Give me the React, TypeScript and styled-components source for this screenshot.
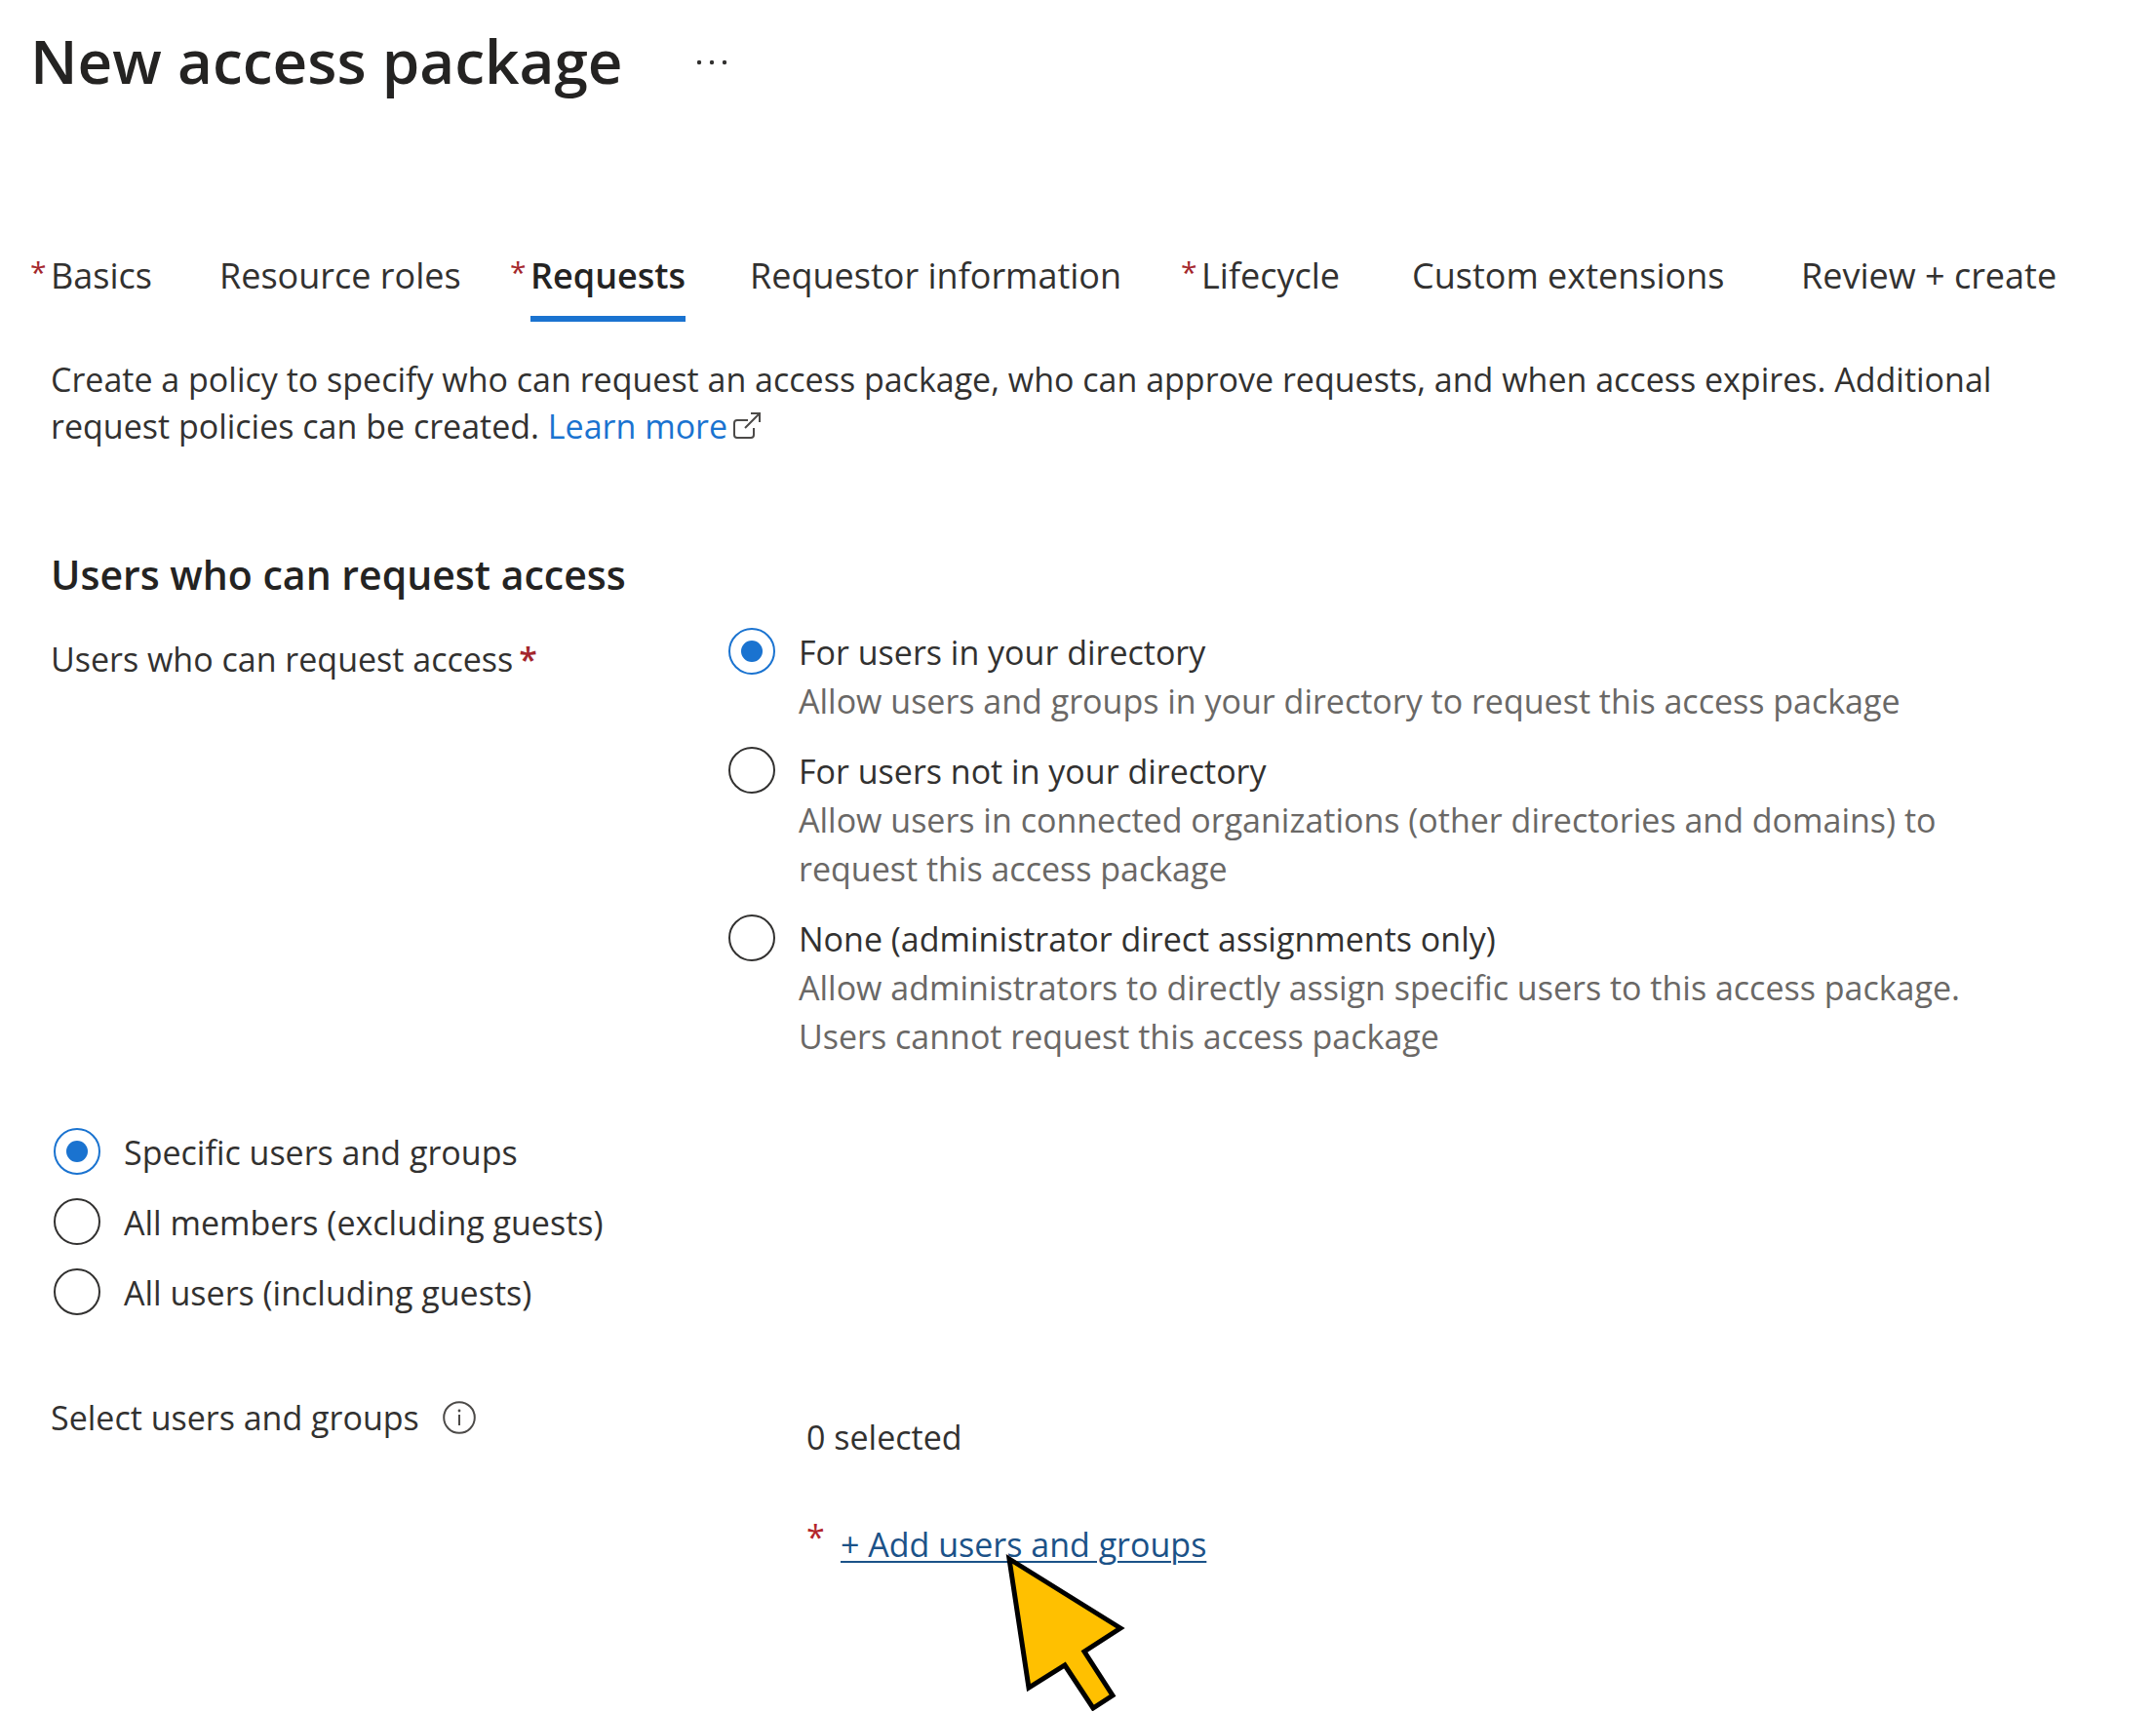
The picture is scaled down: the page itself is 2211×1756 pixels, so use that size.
import React, { useState } from "react";
import styled, { createGlobalStyle } from "styled-components";

const GlobalStyle = createGlobalStyle`
  *, *::before, *::after { box-sizing: border-box; }
  body {
    margin: 0;
    background: #ffffff;
    color: #323130;
    font-family: "Open Sans", "Noto Sans", sans-serif;
    font-size: 34px;
    line-height: 48px;
  }
`;

const Page = styled.main`
  min-height: 100vh;
  padding: 22px 94px 0 31px;
`;

const Header = styled.header`
  display: flex;
  align-items: center;
  gap: 74px;
  height: 80px;
`;

const Title = styled.h1`
  margin: 0;
  color: #242322;
  font-size: 62px;
  font-weight: 600;
  line-height: 80px;
`;

const MoreButton = styled.button`
  display: flex;
  padding: 4px 0 0;
  border: 0;
  background: none;
  color: #323130;
`;

const Tabs = styled.div`
  display: grid;
  grid-template-columns: 173fr 319fr 225fr 463fr 216fr 399fr 291fr;
  margin-top: 157px;
`;

const TabItem = styled.div`
  display: flex;
  align-items: flex-start;
`;

const TabMark = styled.span`
  flex: none;
  width: 21px;
  color: #a4262c;
  font-size: 30px;
  line-height: 40px;
`;

const Tab = styled.button<{ $active: boolean }>`
  height: 71px;
  padding: 0 0 17px;
  border: 0;
  border-bottom: 6px solid ${(p) => (p.$active ? "#1a73d0" : "transparent")};
  background: none;
  color: ${(p) => (p.$active ? "#242322" : "#323130")};
  font: inherit;
  font-size: 36px;
  font-weight: ${(p) => (p.$active ? 600 : 400)};
  white-space: nowrap;
`;

const Content = styled.div`
  padding: 35px 56px 0 21px;
`;

const Intro = styled.p`
  margin: 0;
`;

const LearnMore = styled.a`
  color: #1a73d0;
  text-decoration: none;

  svg {
    margin-left: 6px;
    color: #4c4a48;
  }
`;

const SectionTitle = styled.h2`
  margin: 96px 0 0;
  color: #242322;
  font-size: 41px;
  font-weight: 600;
  line-height: 64px;
`;

const Field = styled.div<{ $top: number }>`
  display: grid;
  grid-template-columns: 695px 1fr;
  margin-top: ${(p) => p.$top}px;
`;

const FieldLabel = styled.div`
  display: flex;
  align-items: center;
  align-self: start;
  padding-top: 8px;
`;

const Required = styled.span`
  margin-left: 6px;
  color: #a4262c;
  font-weight: 600;
`;

const RadioGroup = styled.div`
  display: flex;
  flex-direction: column;
  gap: 22px;
`;

const Option = styled.label`
  display: flex;
  align-items: flex-start;
  gap: 24px;
  line-height: 50px;
`;

const Radio = styled.input`
  flex: none;
  width: 48px;
  height: 48px;
  margin: 0;
  padding: 11px;
  border: 2px solid #323130;
  border-radius: 50%;
  appearance: none;
  background: transparent content-box;

  &:checked {
    border-color: #1a73d0;
    background-color: #1a73d0;
  }
`;

const OptionText = styled.span`
  display: flex;
  flex-direction: column;
`;

const Hint = styled.span`
  color: #6a6866;
`;

const ScopeGroup = styled(RadioGroup)`
  margin-top: 69px;
  padding-left: 3px;
`;

const InfoButton = styled.button`
  display: flex;
  margin-left: 24px;
  padding: 0;
  border: 0;
  background: none;
  color: #4c4a48;
`;

const Selection = styled.div`
  display: flex;
  flex-direction: column;
  gap: 62px;
  padding: 28px 0 0 80px;
`;

const AddRow = styled.div`
  display: flex;
  align-items: flex-start;
  gap: 16px;
`;

const AddMark = styled.span`
  width: 19px;
  color: #b3262c;
  line-height: 32px;
`;

const AddLink = styled.a`
  position: relative;
  color: #1b5288;
  text-decoration: underline;
  text-decoration-thickness: 2px;
  text-underline-offset: 4px;
`;

const Pointer = styled.svg`
  position: absolute;
  top: 29px;
  left: 166px;
`;

const tabs = [
  { name: "Basics", required: true },
  { name: "Resource roles", required: false },
  { name: "Requests", required: true },
  { name: "Requestor information", required: false },
  { name: "Lifecycle", required: true },
  { name: "Custom extensions", required: false },
  { name: "Review + create", required: false },
];

const audiences = [
  {
    title: "For users in your directory",
    hint: "Allow users and groups in your directory to request this access package",
  },
  {
    title: "For users not in your directory",
    hint: "Allow users in connected organizations (other directories and domains) to request this access package",
  },
  {
    title: "None (administrator direct assignments only)",
    hint: "Allow administrators to directly assign specific users to this access package. Users cannot request this access package",
  },
];

const scopes = [
  "Specific users and groups",
  "All members (excluding guests)",
  "All users (including guests)",
];

export default function App() {
  const [tab, setTab] = useState("Requests");
  const [audience, setAudience] = useState(0);
  const [scope, setScope] = useState(0);

  return (
    <>
      <GlobalStyle />
      <Page>
        <Header>
          <Title>New access package</Title>
          <MoreButton type="button" aria-label="More actions">
            <svg width="34" height="8" viewBox="0 0 34 8" fill="currentColor">
              <circle cx="4" cy="4" r="2.2" />
              <circle cx="17" cy="4" r="2.2" />
              <circle cx="30" cy="4" r="2.2" />
            </svg>
          </MoreButton>
        </Header>

        <Tabs role="tablist">
          {tabs.map((t) => (
            <TabItem key={t.name} role="presentation">
              <TabMark>{t.required ? "*" : ""}</TabMark>
              <Tab
                type="button"
                role="tab"
                aria-selected={tab === t.name}
                $active={tab === t.name}
                onClick={() => setTab(t.name)}
              >
                {t.name}
              </Tab>
            </TabItem>
          ))}
        </Tabs>

        <Content>
          <Intro>
            Create a policy to specify who can request an access package, who can approve
            requests, and when access expires. Additional request policies can be created.{" "}
            <LearnMore href="#learn-more">
              Learn more
              <svg width="29" height="27" viewBox="0 0 29 27" fill="none" stroke="currentColor" strokeWidth="2">
                <path d="M15 8H4a3 3 0 0 0-3 3v12a3 3 0 0 0 3 3h14a3 3 0 0 0 3-3v-7" />
                <path d="M18 1h9v9M27 1L12 16" />
              </svg>
            </LearnMore>
          </Intro>

          <SectionTitle>Users who can request access</SectionTitle>

          <Field $top={23}>
            <FieldLabel id="audience-label">
              Users who can request access<Required>*</Required>
            </FieldLabel>
            <RadioGroup role="radiogroup" aria-labelledby="audience-label">
              {audiences.map((a, i) => (
                <Option key={a.title}>
                  <Radio
                    type="radio"
                    name="audience"
                    checked={audience === i}
                    onChange={() => setAudience(i)}
                  />
                  <OptionText>
                    <span>{a.title}</span>
                    <Hint>{a.hint}</Hint>
                  </OptionText>
                </Option>
              ))}
            </RadioGroup>
          </Field>

          <ScopeGroup role="radiogroup" aria-label="Scope">
            {scopes.map((s, i) => (
              <Option key={s}>
                <Radio type="radio" name="scope" checked={scope === i} onChange={() => setScope(i)} />
                <OptionText>{s}</OptionText>
              </Option>
            ))}
          </ScopeGroup>

          <Field $top={71}>
            <FieldLabel>
              Select users and groups
              <InfoButton type="button" aria-label="About selecting users and groups">
                <svg width="34" height="34" viewBox="0 0 34 34" fill="none" stroke="currentColor">
                  <circle cx="17" cy="17" r="15.8" strokeWidth="2" />
                  <path d="M17 14v11" strokeWidth="2" />
                  <circle cx="17" cy="10" r="1.4" fill="currentColor" stroke="none" />
                </svg>
              </InfoButton>
            </FieldLabel>
            <Selection>
              <span>0 selected</span>
              <AddRow>
                <AddMark>*</AddMark>
                <AddLink href="#add">
                  + Add users and groups
                  <Pointer width="130" height="166" viewBox="0 0 130 166" aria-hidden="true">
                    <path
                      d="M7 10L121 81L84 105L113 150L93 163L64 119L27 142Z"
                      fill="#ffc000"
                      stroke="#000000"
                      strokeWidth="5"
                    />
                  </Pointer>
                </AddLink>
              </AddRow>
            </Selection>
          </Field>
        </Content>
      </Page>
    </>
  );
}
